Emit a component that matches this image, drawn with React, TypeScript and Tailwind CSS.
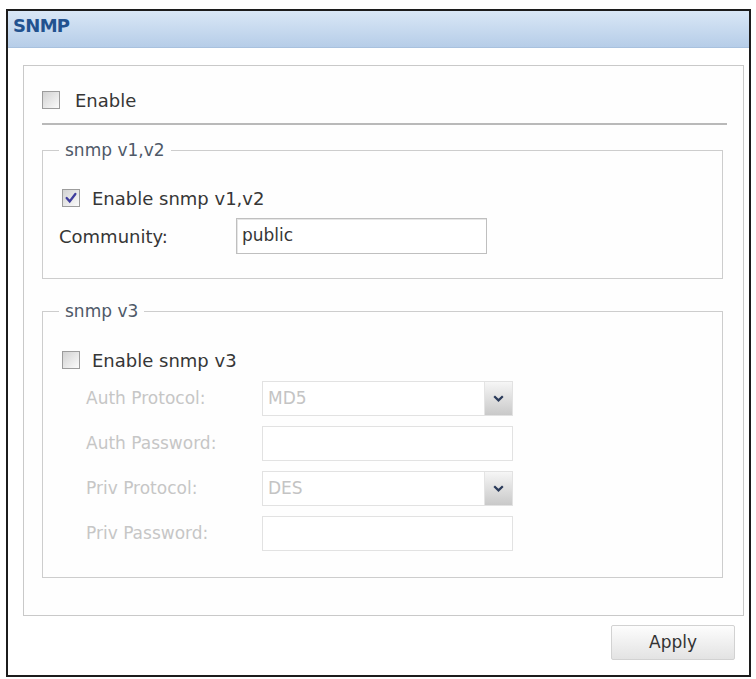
import React from 'react';

const font = { fontFamily: '"DejaVu Sans", Verdana, sans-serif' };

const Checkbox: React.FC<{ checked?: boolean }> = ({ checked }) => (
  <span className="flex h-[18px] w-[18px] items-center justify-center border border-[#9c9c9c] bg-gradient-to-br from-[#d2d2d2] to-[#fbfbfb]">
    {checked && (
      <svg width="12" height="12" viewBox="0 0 11 11">
        <path d="M1.5 5.5 L4.3 8.6 L9.5 1.8" fill="none" stroke="#3f3d9e" strokeWidth="2.1" strokeLinecap="round" />
      </svg>
    )}
  </span>
);

const Dropdown: React.FC<{ value: string }> = ({ value }) => (
  <div className="flex h-[35px] w-[251px] items-stretch border border-[#e2e2e2] bg-white">
    <span className="flex flex-1 items-center pl-[5px] text-[17px] text-[#c4c4c4]">{value}</span>
    <span className="flex w-[28px] items-center justify-center border-l border-[#e4e4e4] bg-gradient-to-b from-[#f6f6f6] to-[#c9c9c9]">
      <svg width="11" height="7" viewBox="0 0 11 7">
        <path d="M1.2 1.2 L5.5 5.4 L9.8 1.2" fill="none" stroke="#2a3a5a" strokeWidth="2.2" />
      </svg>
    </span>
  </div>
);

const DisabledRow: React.FC<{ label: string; children: React.ReactNode }> = ({ label, children }) => (
  <div className="flex h-[35px] items-center">
    <span className="ml-[27px] w-[176px] text-[17px] text-[#c6c6c6]">{label}</span>
    {children}
  </div>
);

export default function App() {
  return (
    <div className="min-h-[679px] bg-white pl-[6px] pt-[9px] text-[#363636]" style={font}>
      <div className="flex h-[668px] w-[745px] flex-col border-2 border-[#1c1c1c] bg-white">
        {/* title bar */}
        <div className="flex h-[37px] items-center border-b border-[#a8c1de] bg-gradient-to-b from-[#d9e7f6] to-[#b6cde8] pb-[8px] pl-[5px]">
          <span className="text-[18px] font-bold tracking-[-0.7px] text-[#22528f]">SNMP</span>
        </div>

        <div className="pl-[15px] pt-[17px]">
          <div className="h-[551px] w-[721px] border border-[#c9c9c9] bg-[#fefefe] pl-[18px]">
            <div className="mt-[16px] flex h-[36px] items-center gap-[15px]">
              <Checkbox />
              <span className="text-[18px]">Enable</span>
            </div>
            <div className="mt-[5px] h-[2px] w-[685px] bg-[#b9b9b9]" />

            {/* v1/v2 */}
            <fieldset className="mt-[15px] w-[681px] border border-[#cdcdcd] pb-[24px] pl-[16px]">
              <legend className="px-[6px] text-[17px] leading-[20px] text-[#4f5968]">snmp v1,v2</legend>
              <div className="mt-[23px] flex h-[30px] items-center gap-[12px] pl-[3px]">
                <Checkbox checked />
                <span className="text-[18px]">Enable snmp v1,v2</span>
              </div>
              <div className="mt-[5px] flex h-[36px] items-center">
                <span className="w-[177px] text-[18px]">Community:</span>
                <div className="flex h-[36px] w-[251px] items-center border border-[#bfbfbf] bg-white pl-[5px] text-[17px] shadow-[inset_1px_1px_0_#e6e6e6]">
                  public
                </div>
              </div>
            </fieldset>

            {/* v3 */}
            <fieldset className="mt-[22px] w-[681px] border border-[#cdcdcd] pb-[26px] pl-[16px]">
              <legend className="px-[6px] text-[17px] leading-[20px] text-[#4f5968]">snmp v3</legend>
              <div className="mt-[24px] flex h-[30px] items-center gap-[12px] pl-[3px]">
                <Checkbox />
                <span className="text-[18px]">Enable snmp v3</span>
              </div>
              <div className="mt-[6px] flex flex-col gap-[10px]">
                <DisabledRow label="Auth Protocol:">
                  <Dropdown value="MD5" />
                </DisabledRow>
                <DisabledRow label="Auth Password:">
                  <div className="h-[35px] w-[251px] border border-[#e2e2e2] bg-white" />
                </DisabledRow>
                <DisabledRow label="Priv Protocol:">
                  <Dropdown value="DES" />
                </DisabledRow>
                <DisabledRow label="Priv Password:">
                  <div className="h-[35px] w-[251px] border border-[#e2e2e2] bg-white" />
                </DisabledRow>
              </div>
            </fieldset>
          </div>

          <div className="mt-[9px] flex w-[721px] justify-end pr-[9px]">
            <button className="h-[35px] w-[124px] rounded-[2px] border border-[#d2d2d2] bg-gradient-to-b from-[#fdfdfd] to-[#e3e3e3] text-[17px] text-[#333]">
              Apply
            </button>
          </div>
        </div>
      </div>
    </div>
  );
}
